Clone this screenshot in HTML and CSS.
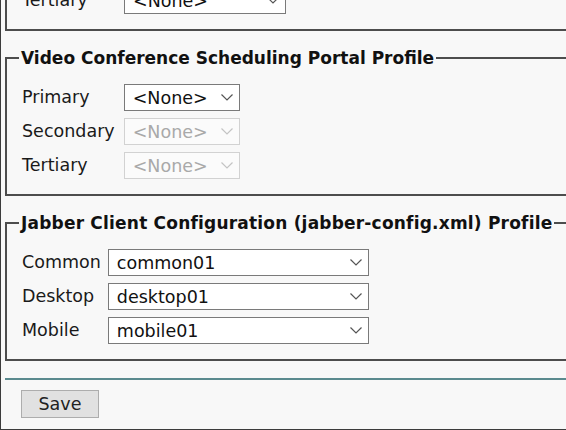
FILE: index.html
```html
<!DOCTYPE html>
<html lang="en">
<head>
    <meta charset="UTF-8">
    <meta name="viewport" content="width=device-width, initial-scale=1.0">
    <title>Device Profile</title>
    <link rel="stylesheet" href="styles.css">
</head>
<body>
<div class="page">

<fieldset class="box first">
    <div class="rows">
        <span class="lbl">Tertiary</span>
        <span class="pick w-md">
            <select><option>&lt;None&gt;</option></select>
            <svg class="chev" width="12" height="7" viewBox="0 0 12 7"><path d="M0.5 0.5 L6 6 L11.5 0.5" fill="none" stroke="#555" stroke-width="1.2"/></svg>
        </span>
    </div>
</fieldset>

<fieldset class="box">
    <legend>Video Conference Scheduling Portal Profile</legend>
    <div class="rows loose">
        <span class="lbl">Primary</span>
        <span class="pick w-sm">
            <select><option>&lt;None&gt;</option></select>
            <svg class="chev" width="12" height="7" viewBox="0 0 12 7"><path d="M0.5 0.5 L6 6 L11.5 0.5" fill="none" stroke="#555" stroke-width="1.2"/></svg>
        </span>
        <span class="lbl">Secondary</span>
        <span class="pick w-sm off">
            <select disabled><option>&lt;None&gt;</option></select>
            <svg class="chev" width="12" height="7" viewBox="0 0 12 7"><path d="M0.5 0.5 L6 6 L11.5 0.5" fill="none" stroke="#c4c4c4" stroke-width="1.2"/></svg>
        </span>
        <span class="lbl">Tertiary</span>
        <span class="pick w-sm off">
            <select disabled><option>&lt;None&gt;</option></select>
            <svg class="chev" width="12" height="7" viewBox="0 0 12 7"><path d="M0.5 0.5 L6 6 L11.5 0.5" fill="none" stroke="#c4c4c4" stroke-width="1.2"/></svg>
        </span>
    </div>
</fieldset>

<fieldset class="box">
    <legend class="wide">Jabber Client Configuration (jabber-config.xml) Profile</legend>
    <div class="rows">
        <span class="lbl">Common</span>
        <span class="pick w-lg">
            <select><option>common01</option></select>
            <svg class="chev" width="12" height="7" viewBox="0 0 12 7"><path d="M0.5 0.5 L6 6 L11.5 0.5" fill="none" stroke="#555" stroke-width="1.2"/></svg>
        </span>
        <span class="lbl">Desktop</span>
        <span class="pick w-lg">
            <select><option>desktop01</option></select>
            <svg class="chev" width="12" height="7" viewBox="0 0 12 7"><path d="M0.5 0.5 L6 6 L11.5 0.5" fill="none" stroke="#555" stroke-width="1.2"/></svg>
        </span>
        <span class="lbl">Mobile</span>
        <span class="pick w-lg">
            <select><option>mobile01</option></select>
            <svg class="chev" width="12" height="7" viewBox="0 0 12 7"><path d="M0.5 0.5 L6 6 L11.5 0.5" fill="none" stroke="#555" stroke-width="1.2"/></svg>
        </span>
    </div>
</fieldset>

<div class="actions">
    <button type="button" class="save">Save</button>
</div>

</div>
</body>
</html>
```

FILE: styles.css
```css
body{
    margin: 0;
    overflow: hidden;
    font-family: "DejaVu Sans", Verdana, sans-serif;
    font-size: 17.5px;
    color: #1a1a1a;
}
.page{
    width: 620px;
    height: 430px;
    box-sizing: border-box;
    background-color: #f8f8f8;
    border-left: 1px solid #3c3c3c;
    border-bottom: 1px solid #3c3c3c;
    padding-left: 4px;
    overflow: hidden;
}
.box{
    margin: 0 0 17px 0;
    padding: 16px 15px 15px 15px;
    border: 2px solid #4d4d4d;
    min-inline-size: 0;
}
.box.first{
    margin-top: -31px;
}
.box legend{
    font-size: 17px;
    font-weight: bold;
    line-height: 20px;
    padding: 0 2px;
    margin-left: -3px;
    color: #111;
}
.box legend.wide{
    letter-spacing: 0.2px;
}
.rows{
    display: grid;
    grid-template-columns: max-content max-content;
    column-gap: 7px;
    row-gap: 7px;
    align-items: center;
}
.rows.loose{
    column-gap: 9px;
}
.first .rows{
    grid-template-columns: 95px max-content;
}
.lbl{
    line-height: 27px;
}
.pick{
    position: relative;
    display: block;
    height: 27px;
}
.pick select{
    appearance: none;
    -webkit-appearance: none;
    width: 100%;
    height: 27px;
    box-sizing: border-box;
    margin: 0;
    padding: 0 0 0 8px;
    font-family: inherit;
    font-size: 17.5px;
    color: #111;
    background-color: white;
    border: 1px solid #7a7a7a;
    border-radius: 0;
}
.pick.off select{
    color: #a9a9a9;
    background-color: #fbfbfb;
    border-color: #d2d2d2;
    opacity: 1;
}
.chev{
    position: absolute;
    right: 7px;
    top: 10px;
    pointer-events: none;
}
.w-sm{ width: 116px; }
.w-md{ width: 162px; }
.w-lg{ width: 261px; }
.actions{
    border-top: 2px solid #5a8a8e;
    padding: 10px 0 0 16px;
}
.save{
    width: 78px;
    height: 28px;
    font-family: inherit;
    font-size: 17.5px;
    color: #222;
    background-color: #e1e1e1;
    border: 1px solid #adadad;
    border-radius: 0;
    padding: 0;
}
```
